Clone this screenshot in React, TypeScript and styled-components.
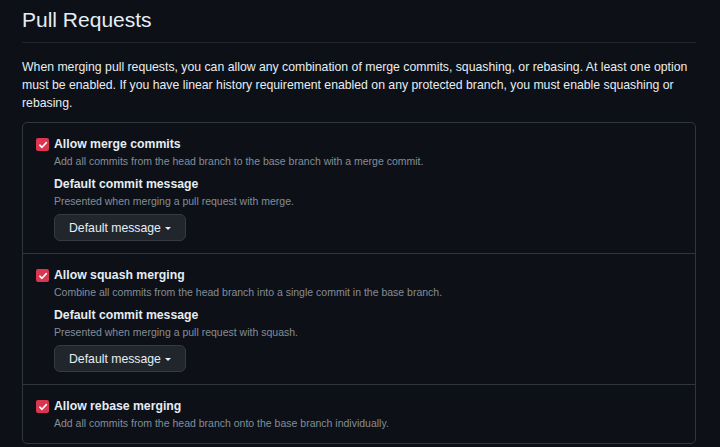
import styled, { createGlobalStyle } from "styled-components";

const GlobalStyle = createGlobalStyle`
  html, body {
    margin: 0;
    padding: 0;
    background: #0d1117;
  }
  body {
    font-family: "Liberation Sans", Arial, sans-serif;
    color: #e6edf3;
    -webkit-font-smoothing: antialiased;
  }
`;

const Page = styled.div`
  width: 696px;
  padding: 4px 0 0 22px;
  height: 447px;
  box-sizing: border-box;
  overflow: hidden;
`;

const Subhead = styled.div`
  padding-bottom: 6px;
  border-bottom: 1px solid #21262d;
`;

const Title = styled.h2`
  margin: 0;
  font-size: 21px;
  font-weight: 400;
  line-height: 32px;
  color: #e6edf3;
`;

const Intro = styled.p`
  margin: 15px 0 10px;
  font-size: 12.25px;
  line-height: 18px;
  color: #e6edf3;
`;

const Box = styled.div`
  border: 1px solid #30363d;
  border-radius: 5px;
`;

const Row = styled.div`
  display: flex;
  align-items: flex-start;
  gap: 5px;
  padding: 12px 13px;

  & + & {
    border-top: 1px solid #30363d;
  }
`;

const CheckBox = styled.span`
  flex: none;
  width: 13px;
  height: 13px;
  margin-top: 3px;
  border-radius: 2px;
  background: #da3650;
  display: flex;
  align-items: center;
  justify-content: center;
`;

const Body = styled.div`
  display: flex;
  flex-direction: column;
  align-items: flex-start;
`;

const Label = styled.div`
  font-size: 12.25px;
  font-weight: 700;
  line-height: 18px;
  color: #e6edf3;
`;

const SubLabel = styled(Label)`
  margin-top: 6px;
`;

const Note = styled.div`
  font-size: 10.5px;
  line-height: 16px;
  color: #848d97;
`;

const Button = styled.button`
  margin-top: 5px;
  height: 27px;
  padding: 0 14px;
  display: flex;
  align-items: center;
  gap: 4px;
  background: #21262d;
  border: 1px solid #363b42;
  border-radius: 6px;
  color: #e6edf3;
  font-family: "Liberation Sans", Arial, sans-serif;
  font-size: 12.25px;
  cursor: pointer;
`;

const Caret = styled.span`
  width: 0;
  height: 0;
  margin-top: 2px;
  border-left: 3.5px solid transparent;
  border-right: 3.5px solid transparent;
  border-top: 3.5px solid #e6edf3;
`;

const Check = () => (
  <svg width="10" height="10" viewBox="0 0 10 10">
    <path d="M1.8 5.2 L4 7.3 L8.3 2.6" fill="none" stroke="#fff" strokeWidth="1.6" strokeLinecap="round" strokeLinejoin="round" />
  </svg>
);

interface OptionProps {
  label: string;
  note: string;
  method?: string;
}

const MergeOption = ({ label, note, method }: OptionProps) => (
  <Row>
    <CheckBox>
      <Check />
    </CheckBox>
    <Body>
      <Label>{label}</Label>
      <Note>{note}</Note>
      {method && (
        <>
          <SubLabel>Default commit message</SubLabel>
          <Note>Presented when merging a pull request with {method}.</Note>
          <Button>
            Default message
            <Caret />
          </Button>
        </>
      )}
    </Body>
  </Row>
);

const App = () => {
  return (
    <>
      <GlobalStyle />
      <Page>
        <Subhead>
          <Title>Pull Requests</Title>
        </Subhead>
        <Intro>
          When merging pull requests, you can allow any combination of merge commits, squashing, or rebasing. At least
          one option must be enabled. If you have linear history requirement enabled on any protected branch, you must
          enable squashing or rebasing.
        </Intro>
        <Box>
          <MergeOption
            label="Allow merge commits"
            note="Add all commits from the head branch to the base branch with a merge commit."
            method="merge"
          />
          <MergeOption
            label="Allow squash merging"
            note="Combine all commits from the head branch into a single commit in the base branch."
            method="squash"
          />
          <MergeOption
            label="Allow rebase merging"
            note="Add all commits from the head branch onto the base branch individually."
          />
        </Box>
      </Page>
    </>
  );
};

export default App;
